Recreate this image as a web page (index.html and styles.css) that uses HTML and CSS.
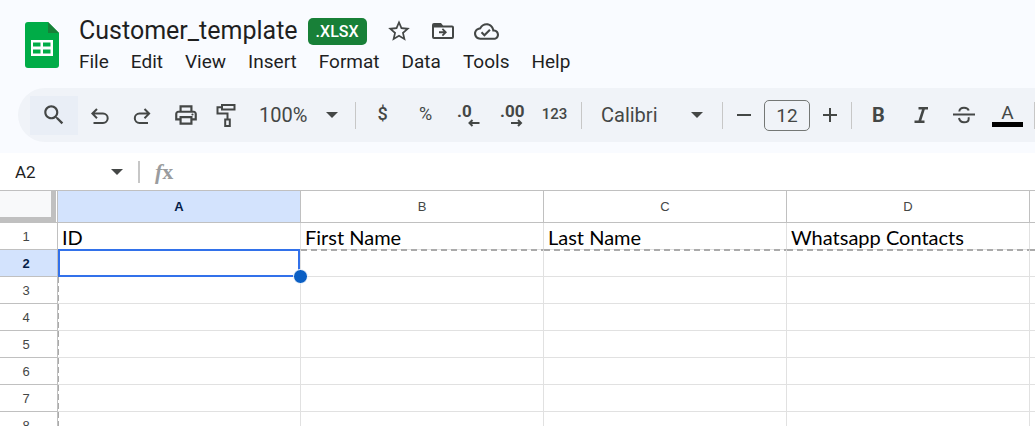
FILE: index.html
```html
<!DOCTYPE html>
<html lang="en">
<head>
    <meta charset="UTF-8">
    <meta name="viewport" content="width=device-width, initial-scale=1.0">
    <title>Customer_template</title>
    <link rel="stylesheet" href="styles.css">
</head>
<body>
    <header class="app-header">
        <a class="logo" href="#" aria-label="Sheets home">
            <svg width="34" height="46" viewBox="0 0 34 46">
                <path d="M3 0h20l11 11v32a3 3 0 0 1-3 3H3a3 3 0 0 1-3-3V3a3 3 0 0 1 3-3z" fill="#00ac47"/>
                <path d="M23 0l11 11H23z" fill="#188038"/>
                <path d="M6 18h22v16H6zM8 20.500v4h7.500v-4zM18 20.500v4h7.500v-4zM8 27.500v4h7.500v-4zM18 27.500v4h7.500v-4z" fill="#fff" fill-rule="evenodd"/>
            </svg>
        </a>
        <div class="doc-info">
            <div class="title-row">
                <h1 class="doc-title">Customer_template</h1>
                <span class="badge">.XLSX</span>
                <button class="title-btn" aria-label="Star">
                    <svg width="26" height="26" viewBox="0 0 24 24"><path d="M22 9.240l-7.190-.62L12 2 9.190 8.630 2 9.240l5.460 4.730L5.820 21 12 17.270 18.180 21l-1.630-7.030L22 9.240zM12 15.400l-3.760 2.270 1-4.280-3.320-2.880 4.380-.38L12 6.100l1.710 4.040 4.380.38-3.320 2.880 1 4.280L12 15.400z"/></svg>
                </button>
                <button class="title-btn" aria-label="Move">
                    <svg width="24" height="24" viewBox="0 0 24 24">
                        <path d="M3 4h7l2 2.500h9a2 2 0 0 1 2 2V18a2 2 0 0 1-2 2H3a2 2 0 0 1-2-2V6a2 2 0 0 1 2-2zm0 4.500V18h18V8.500z" fill-rule="evenodd"/>
                        <path d="M8 12.200h4.500L10.800 10.500 12 9.200l4 4-4 4-1.200-1.300 1.700-1.700H8z"/>
                    </svg>
                </button>
                <button class="title-btn" aria-label="Saved to Drive">
                    <svg width="25" height="25" viewBox="0 0 24 24"><path d="M19.350 10.040C18.670 6.590 15.640 4 12 4 9.110 4 6.600 5.640 5.350 8.040 2.340 8.360 0 10.910 0 14c0 3.310 2.690 6 6 6h13c2.760 0 5-2.240 5-5 0-2.640-2.050-4.780-4.650-4.960zM19 18H6c-2.210 0-4-1.790-4-4 0-2.050 1.530-3.760 3.560-3.970l1.070-.11.5-.95C8.080 7.140 9.940 6 12 6c2.620 0 4.880 1.860 5.390 4.430l.3 1.500 1.530.11c1.560.1 2.780 1.410 2.780 2.960 0 1.650-1.350 3-3 3zm-9-3.820l-2.090-2.090L6.500 13.500 10 17l6.010-6.010-1.410-1.410z"/></svg>
                </button>
            </div>
            <nav class="menu">
                <button>File</button>
                <button>Edit</button>
                <button>View</button>
                <button>Insert</button>
                <button>Format</button>
                <button>Data</button>
                <button>Tools</button>
                <button>Help</button>
            </nav>
        </div>
    </header>

    <div class="toolbar">
        <button class="tool search" aria-label="Search the menus">
            <svg width="26" height="26" viewBox="0 0 24 24"><path d="M15.500 14h-.79l-.28-.27C15.410 12.590 16 11.110 16 9.500 16 5.910 13.090 3 9.500 3S3 5.910 3 9.500 5.910 16 9.500 16c1.610 0 3.090-.59 4.230-1.570l.27.28v.79l5 4.990L20.490 19l-4.990-5zm-6 0C7.010 14 5 11.990 5 9.500S7.010 5 9.500 5 14 7.010 14 9.500 11.990 14 9.500 14z"/></svg>
        </button>
        <button class="tool" aria-label="Undo">
            <svg class="line" width="24" height="24" viewBox="0 0 24 24"><path d="M5.500 20h9.500a4.700 4.700 0 0 0 0-9.400H4.500M9 6L4.400 10.600 9 15.200"/></svg>
        </button>
        <button class="tool" aria-label="Redo">
            <svg class="line" width="24" height="24" viewBox="0 0 24 24"><path d="M17 20H8.500a4.700 4.700 0 0 1 0-9.400h9.500M13.500 6l4.600 4.600-4.600 4.600"/></svg>
        </button>
        <button class="tool" aria-label="Print">
            <svg width="26" height="26" viewBox="0 0 24 24"><path d="M19 8h-1V3H6v5H5c-1.660 0-3 1.340-3 3v6h4v4h12v-4h4v-6c0-1.660-1.340-3-3-3zM8 5h8v3H8V5zm8 12v2H8v-4h8v2zm2-2v-2H6v2H4v-4c0-.55.45-1 1-1h14c.55 0 1 .45 1 1v4h-2z"/><circle cx="18" cy="11.500" r="1"/></svg>
        </button>
        <button class="tool" aria-label="Paint format">
            <svg class="line" width="26" height="26" viewBox="0 0 26 26"><path d="M6 3h12.500v4.500H6zM6 5.200H1.500v6.300H11.500V17M9.200 17.500h4.600v6.500h-4.600z"/></svg>
        </button>
        <label class="picker zoom">
            <select aria-label="Zoom">
                <option>100%</option>
            </select>
        </label>
        <span class="divider"></span>
        <button class="tool currency" aria-label="Format as currency">$</button>
        <button class="tool percent" aria-label="Format as percent">%</button>
        <button class="tool" aria-label="Decrease decimal places">
            <span class="decimal">
                .0
                <svg width="12" height="8" viewBox="0 0 12 8"><path d="M11.500 4H1.500M4.500 1L1.500 4l3 3"/></svg>
            </span>
        </button>
        <button class="tool" aria-label="Increase decimal places">
            <span class="decimal">
                .00
                <svg width="12" height="8" viewBox="0 0 12 8"><path d="M0 4h10M7 1l3 3-3 3"/></svg>
            </span>
        </button>
        <button class="tool number" aria-label="More formats">123</button>
        <span class="divider"></span>
        <label class="picker font">
            <select aria-label="Font">
                <option>Calibri</option>
            </select>
        </label>
        <span class="divider"></span>
        <button class="tool step" aria-label="Decrease font size">
            <svg class="line" width="16" height="16" viewBox="0 0 16 16"><path d="M1 8h14"/></svg>
        </button>
        <input class="font-size" type="text" value="12" aria-label="Font size">
        <button class="tool step" aria-label="Increase font size">
            <svg class="line" width="16" height="16" viewBox="0 0 16 16"><path d="M1 8h14M8 1v14"/></svg>
        </button>
        <span class="divider"></span>
        <button class="tool bold" aria-label="Bold">B</button>
        <button class="tool" aria-label="Italic">
            <svg width="24" height="24" viewBox="0 0 24 24"><path d="M8.500 4v2.400h3.500L8.500 17.600H4.500V20h10v-2.400h-3.200l3.500-11.200H18V4z"/></svg>
        </button>
        <button class="tool" aria-label="Strikethrough">
            <svg class="line" width="24" height="24" viewBox="0 0 24 24"><path d="M0 11.500h22M6.300 8.500C6.500 6 8.500 4.700 11 4.700s4.200 1 4.700 2.800M6 15c.5 3 2.500 4.300 5 4.300s4.700-1.200 4.700-3.600c0-.6-.1-1.100-.3-1.500"/></svg>
        </button>
        <button class="tool" aria-label="Text color"><span class="text-color">A</span></button>
        <span class="divider"></span>
    </div>

    <div class="formula-bar">
        <label class="picker name-box">
            <input type="text" value="A2" aria-label="Name box">
        </label>
        <span class="fx"><i>f</i>x</span>
        <input class="formula" type="text" aria-label="Formula">
    </div>

    <main class="sheet">
        <table class="grid">
            <colgroup>
                <col class="row-col">
                <col><col><col><col><col>
            </colgroup>
            <thead>
                <tr>
                    <td class="corner"></td>
                    <th class="active" scope="col">A</th>
                    <th scope="col">B</th>
                    <th scope="col">C</th>
                    <th scope="col">D</th>
                    <td></td>
                </tr>
            </thead>
            <tbody>
                <tr class="frozen"><th scope="row">1</th><td>ID</td><td>First Name</td><td>Last Name</td><td>Whatsapp Contacts</td><td></td></tr>
                <tr class="frozen-edge"><th class="active" scope="row">2</th><td class="selected"></td><td></td><td></td><td></td><td></td></tr>
                <tr><th scope="row">3</th><td></td><td></td><td></td><td></td><td></td></tr>
                <tr><th scope="row">4</th><td></td><td></td><td></td><td></td><td></td></tr>
                <tr><th scope="row">5</th><td></td><td></td><td></td><td></td><td></td></tr>
                <tr><th scope="row">6</th><td></td><td></td><td></td><td></td><td></td></tr>
                <tr><th scope="row">7</th><td></td><td></td><td></td><td></td><td></td></tr>
                <tr><th scope="row">8</th><td></td><td></td><td></td><td></td><td></td></tr>
            </tbody>
        </table>
    </main>
</body>
</html>
```
FILE: styles.css
```css
* {
    box-sizing: border-box;
}
body {
    display: flex;
    flex-direction: column;
    height: 100vh;
    margin: 0;
    overflow: hidden;
    font-family: Roboto, "Liberation Sans", sans-serif;
    color: #1f1f1f;
    background-color: #f9fbff;
}
button,
input,
select {
    margin: 0;
    padding: 0;
    border: none;
    background: none;
    font: inherit;
    color: inherit;
}
svg {
    display: block;
    fill: #444746;
}
svg.line,
.decimal svg {
    fill: none;
    stroke: #444746;
    stroke-width: 2;
}

/* Header */
.app-header {
    display: flex;
    flex: none;
    gap: 20px;
    padding: 16px 25px 10px;
}
.logo {
    padding-top: 6px;
}
.title-row {
    display: flex;
    align-items: center;
    height: 30px;
}
.doc-title {
    margin: 0 10px 0 0;
    font-size: 25px;
    font-weight: 400;
    line-height: 30px;
}
.badge {
    padding: 0 8px;
    border-radius: 5px;
    background-color: #188038;
    color: white;
    font-size: 16px;
    font-weight: 500;
    line-height: 27px;
}
.title-btn {
    margin-left: 19px;
}
.menu {
    display: flex;
    gap: 22px;
    font-size: 19px;
    line-height: 32px;
}

/* Toolbar */
.toolbar {
    display: flex;
    flex: none;
    align-items: center;
    height: 54px;
    margin: 0 0 11px 18px;
    padding-left: 12px;
    border-radius: 27px 0 0 27px;
    background-color: #f0f3f8;
    color: #444746;
    overflow: hidden;
}
.tool {
    display: flex;
    flex: none;
    align-items: center;
    justify-content: center;
    width: 43px;
    height: 39px;
}
.search {
    width: 48px;
    background-color: #e9eef6;
}
.step {
    width: 32px;
}
.divider {
    flex: none;
    width: 1px;
    height: 27px;
    margin: 0 5px;
    background-color: #c7c7c7;
}
.picker {
    display: flex;
    flex: none;
    align-items: center;
}
.picker select {
    flex: 1;
    min-width: 0;
    appearance: none;
    font-size: 20px;
}
.picker::after {
    content: "";
    border: 6px solid transparent;
    border-top-color: #444746;
    border-bottom: none;
}
.zoom {
    width: 100px;
    padding: 0 12px 0 9px;
}
.font {
    width: 130px;
    padding: 0 14px;
}
.currency,
.percent {
    padding-bottom: 3px;
    font-size: 18px;
}
.currency,
.number {
    font-weight: 500;
}
.number {
    padding-bottom: 3px;
    font-size: 15px;
}
.decimal {
    display: flex;
    flex-direction: column;
    width: 23px;
    font-size: 17px;
    font-weight: 700;
    line-height: 16px;
    text-align: left;
}
.decimal svg {
    align-self: flex-end;
}
.font-size {
    flex: none;
    width: 46px;
    height: 31px;
    margin: 0 4px;
    border: 1px solid #747775;
    border-radius: 5px;
    font-size: 19px;
    text-align: center;
}
.bold {
    font-size: 20px;
    font-weight: 700;
}
.text-color {
    width: 31px;
    border-bottom: 5px solid black;
    font-size: 19px;
    line-height: 19px;
}

/* Formula bar */
.formula-bar {
    display: flex;
    flex: none;
    align-items: center;
    height: 37px;
    background-color: white;
}
.name-box {
    width: 140px;
    height: 22px;
    padding: 0 15px;
    border-right: 2px solid #c7c7c7;
}
.name-box input {
    flex: 1;
    min-width: 0;
    font-size: 17px;
}
.fx {
    padding: 0 15px;
    color: #9a9c9e;
    font: bold 22px/22px "Liberation Serif", serif;
}
.formula {
    flex: 1;
    min-width: 0;
}

/* Grid */
.sheet {
    flex: 1;
    min-height: 0;
    overflow: hidden;
    border-top: 1px solid #c0c0c0;
    background-color: white;
}
.grid {
    width: 1273px;
    table-layout: fixed;
    border-collapse: separate;
    border-spacing: 0;
}
.grid .row-col {
    width: 58px;
}
.grid td,
.grid th {
    height: 27px;
    padding: 0 4px;
    border-right: 1px solid #e1e1e1;
    border-bottom: 1px solid #e1e1e1;
}
.grid td {
    padding-top: 2px;
    font-family: Lato, sans-serif;
    font-size: 20px;
    line-height: 24px;
    color: black;
    white-space: nowrap;
}
.grid th {
    border-color: #c0c0c0;
    font-family: "Liberation Sans", sans-serif;
    font-size: 13px;
    font-weight: 400;
    color: #444746;
}
.grid tbody th {
    padding: 0 5px 0 0;
}
.grid thead td,
.grid thead th {
    height: 32px;
    border-color: #c0c0c0;
}
.grid .corner {
    background: #f8f9fa;
    box-shadow: inset -1px 0 white, inset -6px -5px #c0c0c0;
}
.grid .active {
    background-color: #d3e3fd;
    color: #041e49;
    font-weight: 700;
}

/* Dashed lines mark the frozen row and column */
.frozen td {
    border-bottom-color: transparent;
    background: repeating-linear-gradient(90deg, #aaa 0 6px, #e1e1e1 6px 10px) bottom / 100% 1px no-repeat border-box;
}
.frozen-edge td {
    background: repeating-linear-gradient(90deg, #aaa 0 6px, transparent 6px 10px) top / 100% 1px no-repeat border-box;
}
.frozen-edge ~ tr td:nth-child(2) {
    background: repeating-linear-gradient(#aaa 0 6px, transparent 6px 9px) left / 1px 100% no-repeat;
}
.grid .selected {
    position: relative;
}
.selected::before {
    content: "";
    position: absolute;
    inset: -1px 0 -1px 0;
    border: 2px solid #3271ea;
}
.selected::after {
    content: "";
    position: absolute;
    right: -8px;
    bottom: -8px;
    z-index: 1;
    width: 13px;
    height: 13px;
    border: 1px solid white;
    border-radius: 50%;
    background-color: #0b5fc4;
}
```
